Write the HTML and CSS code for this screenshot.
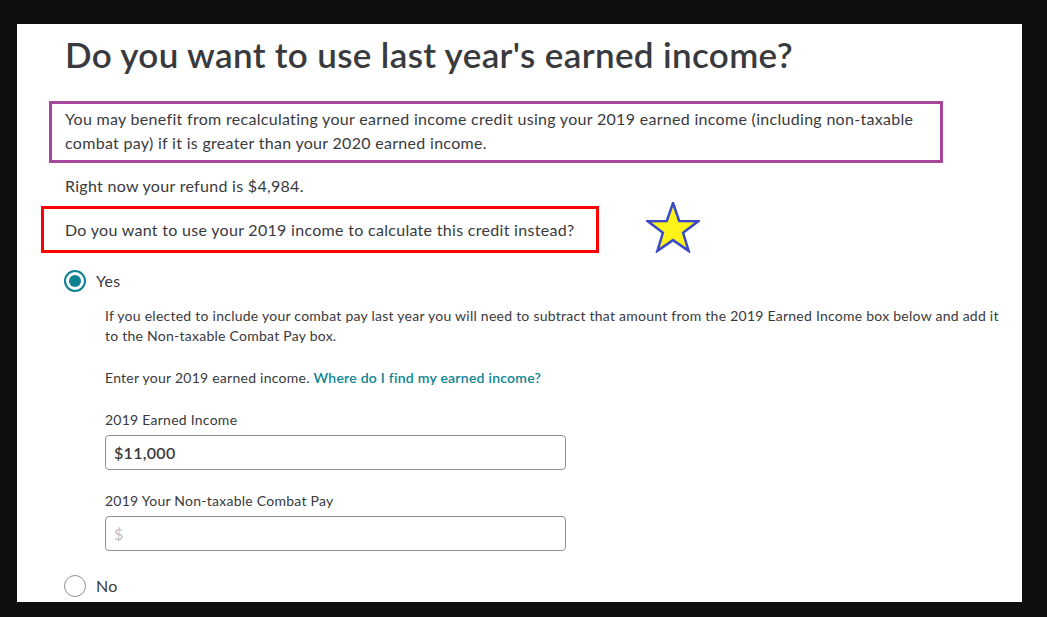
FILE: index.html
```html
<!DOCTYPE html>
<html lang="en">
<head>
    <meta charset="UTF-8">
    <title>Earned income credit</title>
    <link rel="stylesheet" href="styles.css">
</head>
<body>
<div class="page">
    <h1>Do you want to use last year's earned income?</h1>

    <p class="note purple">
        You may benefit from recalculating your earned income credit using your 2019 earned income (including non-taxable
        combat pay) if it is greater than your 2020 earned income.
    </p>

    <p class="refund">Right now your refund is $4,984.</p>

    <div class="question-row">
        <p class="note red">Do you want to use your 2019 income to calculate this credit instead?</p>
        <svg class="star" width="54" height="51" viewBox="0 0 54 51">
            <polygon points="27,1 33.2,18.9 52.2,19.3 37.1,30.8 42.6,48.9 27,38.1 11.4,48.9 16.9,30.8 1.8,19.3 20.8,18.9"
                     fill="#fff31c" stroke="#3a4ac8" stroke-width="2.5" stroke-linejoin="miter"/>
        </svg>
    </div>

    <label class="radio">
        <span class="dot checked"></span>
        <span>Yes</span>
    </label>

    <div class="details">
        <p>If you elected to include your combat pay last year you will need to subtract that amount from the 2019 Earned Income box below and add it to the Non-taxable Combat Pay box.</p>
        <p class="enter">Enter your 2019 earned income. <a href="#">Where do I find my earned income?</a></p>

        <div class="field">
            <label for="earned">2019 Earned Income</label>
            <input id="earned" type="text" value="$11,000">
        </div>
        <div class="field">
            <label for="combat">2019 Your Non-taxable Combat Pay</label>
            <input id="combat" type="text" placeholder="$">
        </div>
    </div>

    <label class="radio no">
        <span class="dot"></span>
        <span>No</span>
    </label>
</div>
</body>
</html>
```

FILE: styles.css
```css
body {
    margin: 0;
    background: #0f0f0f;
    font-family: Lato, "Noto Sans", sans-serif;
    color: #393a3d;
}
.page {
    background: #fff;
    margin: 24px 0 0 17px;
    width: 1005px;
    height: 578px;
    overflow: hidden;
    padding: 0 20px 0 48px;
    box-sizing: border-box;
}
h1 {
    font-size: 35px;
    line-height: 42px;
    font-weight: 600;
    letter-spacing: 0.35px;
    margin: 9px 0 26px 0;
    color: #393a3d;
}
p {
    margin: 0;
}
.note {
    font-size: 16px;
    line-height: 24px;
    letter-spacing: 0.3px;
}
.purple {
    border: 3px solid #a7479b;
    margin-left: -16px;
    width: 894px;
    box-sizing: border-box;
    padding: 3px 13px 5px 13px;
}
.refund {
    font-size: 16px;
    line-height: 24px;
    letter-spacing: 0.3px;
    margin-top: 11px;
}
.question-row {
    display: flex;
    align-items: flex-start;
    margin-top: 8px;
}
.red {
    border: 3px solid #ff0000;
    margin-left: -24px;
    width: 558px;
    box-sizing: border-box;
    padding: 9px 0 8px 21px;
}
.star {
    margin: -4px 0 0 47px;
}
.radio {
    display: flex;
    align-items: center;
    gap: 10px;
    font-size: 16px;
    line-height: 22px;
    letter-spacing: 0.3px;
    margin: 17px 0 0 -1px;
}
.dot {
    width: 22px;
    height: 22px;
    border-radius: 50%;
    border: 1px solid #8d9096;
    box-sizing: border-box;
    position: relative;
}
.dot.checked {
    border: 2px solid #0a8291;
}
.dot.checked::after {
    content: "";
    position: absolute;
    left: 3px;
    top: 3px;
    width: 12px;
    height: 12px;
    border-radius: 50%;
    background: #0a8291;
}
.details {
    padding-left: 40px;
    margin-top: 14px;
    font-size: 14px;
    line-height: 20px;
    letter-spacing: 0.25px;
}
.enter {
    margin-top: 22px;
}
.enter a {
    color: #0d8493;
    font-weight: 600;
    text-decoration: none;
}
.field {
    margin-top: 22px;
}
.field + .field {
    margin-top: 21px;
}
.field label {
    display: block;
    margin-bottom: 5px;
}
.field input {
    width: 461px;
    height: 35px;
    box-sizing: border-box;
    border: 1px solid #8d9096;
    border-radius: 4px;
    padding: 0 8px;
    font-family: Lato, "Noto Sans", sans-serif;
    font-size: 16px;
    font-weight: 600;
    letter-spacing: 0.3px;
    color: #393a3d;
}
.field input::placeholder {
    color: #babec5;
    font-weight: 400;
}
.radio.no {
    margin-top: 24px;
}
```
